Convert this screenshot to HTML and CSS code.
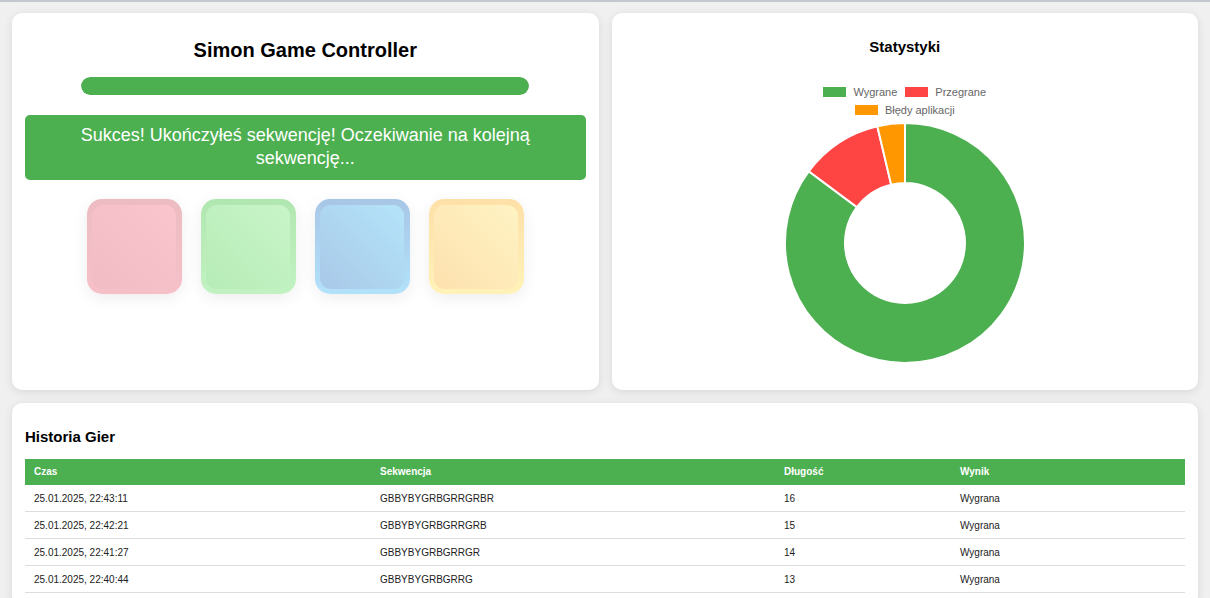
FILE: index.html
```html
<!DOCTYPE html>
<html lang="pl">
<head>
<meta charset="utf-8">
<title>Simon Game Controller</title>
<link rel="stylesheet" href="styles.css">
</head>
<body>
<div class="page">
  <div class="top-row">
    <section class="card game-card">
      <h1 class="game-title">Simon Game Controller</h1>
      <div class="progress"><div class="progress-fill" style="width:100%"></div></div>
      <div class="status">Sukces! Ukończyłeś sekwencję! Oczekiwanie na kolejną sekwencję...</div>
      <div class="pads">
        <div class="pad pad-red"><div class="pad-face"></div></div>
        <div class="pad pad-green"><div class="pad-face"></div></div>
        <div class="pad pad-blue"><div class="pad-face"></div></div>
        <div class="pad pad-yellow"><div class="pad-face"></div></div>
      </div>
    </section>
    <section class="card stats-card">
      <h2 class="stats-title">Statystyki</h2>
      <div class="legend">
        <div class="legend-row">
          <span class="legend-item"><span class="legend-box box-green"></span>Wygrane</span>
          <span class="legend-item"><span class="legend-box box-red"></span>Przegrane</span>
        </div>
        <div class="legend-row">
          <span class="legend-item"><span class="legend-box box-orange"></span>Błędy aplikacji</span>
        </div>
      </div>
      <svg class="donut" width="244" height="244" viewBox="0 0 244 244">
        <path d="M122 2 A120 120 0 1 1 25.75 50.29 L73.87 86.14 A60 60 0 1 0 122 62 Z" fill="#4caf50" stroke="#fff" stroke-width="2"/>
        <path d="M25.75 50.29 A120 120 0 0 1 94.33 5.24 L108.16 63.62 A60 60 0 0 0 73.87 86.14 Z" fill="#ff4444" stroke="#fff" stroke-width="2"/>
        <path d="M94.33 5.24 A120 120 0 0 1 122 2 L122 62 A60 60 0 0 0 108.16 63.62 Z" fill="#ff9800" stroke="#fff" stroke-width="2"/>
      </svg>
    </section>
  </div>
  <section class="card history-card">
    <h2 class="history-title">Historia Gier</h2>
    <table class="history">
      <thead>
        <tr><th class="c-time">Czas</th><th class="c-seq">Sekwencja</th><th class="c-len">Długość</th><th class="c-res">Wynik</th></tr>
      </thead>
      <tbody>
        <tr><td>25.01.2025, 22:43:11</td><td>GBBYBYGRBGRRGRBR</td><td>16</td><td>Wygrana</td></tr>
        <tr><td>25.01.2025, 22:42:21</td><td>GBBYBYGRBGRRGRB</td><td>15</td><td>Wygrana</td></tr>
        <tr><td>25.01.2025, 22:41:27</td><td>GBBYBYGRBGRRGR</td><td>14</td><td>Wygrana</td></tr>
        <tr><td>25.01.2025, 22:40:44</td><td>GBBYBYGRBGRRG</td><td>13</td><td>Wygrana</td></tr>
      </tbody>
    </table>
  </section>
</div>
</body>
</html>
```

FILE: styles.css
```css
* { box-sizing: border-box; }

body {
  margin: 0;
  border-top: 2px solid #c3c7cf;
  background: #f0f0f0;
  font-family: "Liberation Sans", Arial, sans-serif;
  color: #222;
}

.page {
  padding: 11px 12px 12px;
  display: flex;
  flex-direction: column;
  gap: 13px;
}

.top-row {
  display: grid;
  grid-template-columns: 1fr 1fr;
  gap: 13px;
}

.card {
  background: #fff;
  border-radius: 10px;
  box-shadow: 0 2px 10px rgba(0, 0, 0, 0.1);
  padding: 13px;
}

.game-card, .stats-card {
  height: 377px;
}

.game-card {
  display: flex;
  flex-direction: column;
  align-items: center;
}

.game-title {
  margin: 12px 0 0;
  font-size: 20px;
  line-height: 24px;
  font-weight: bold;
  color: #000;
}

.progress {
  margin-top: 15px;
  width: 80%;
  height: 18px;
  border-radius: 10px;
  background: #e0e0e0;
  overflow: hidden;
}

.progress-fill {
  height: 100%;
  background: #4caf50;
  border-radius: 10px;
}

.status {
  margin-top: 20px;
  width: 100%;
  height: 65px;
  padding: 9px 20px;
  background: #4caf50;
  color: #fff;
  border-radius: 5px;
  font-size: 18px;
  line-height: 23px;
  text-align: center;
}

.pads {
  margin-top: 19px;
  display: flex;
  gap: 19px;
  justify-content: center;
}

.pad {
  width: 95px;
  height: 95px;
  border-radius: 15px;
  padding: 6px 6px 5px 5px;
  display: flex;
  box-shadow: 0 4px 16px rgba(0, 0, 0, 0.07);
}

.pad-face {
  flex: 1;
  border-radius: 11px;
}

.pad-red { background: linear-gradient(to bottom, #ecbcc2, #f6c0c9); }
.pad-red .pad-face { background: linear-gradient(to top right, #f1bcc4, #fbc5ce); }

.pad-green { background: linear-gradient(to bottom, #b0e6b0, #c2f2c2); }
.pad-green .pad-face { background: linear-gradient(to top right, #b6ebb6, #c9f5c9); }

.pad-blue { background: linear-gradient(to bottom, #a8c6e6, #b2e2fa); }
.pad-blue .pad-face { background: linear-gradient(to top right, #a9c9e8, #b4e4fa); }

.pad-yellow { background: linear-gradient(to bottom, #fde0a8, #fff2b8); }
.pad-yellow .pad-face { background: linear-gradient(to top right, #fde1ae, #fff3c4); }

.stats-card {
  display: flex;
  flex-direction: column;
  align-items: center;
}

.stats-title {
  margin: 12px 0 0;
  font-size: 15px;
  line-height: 18px;
  font-weight: bold;
  color: #000;
}

.legend {
  margin-top: 29px;
  display: flex;
  flex-direction: column;
  align-items: center;
  gap: 4px;
}

.legend-row {
  display: flex;
  gap: 8px;
  height: 14px;
  align-items: center;
}

.legend-item {
  display: flex;
  align-items: center;
  gap: 7px;
  font-size: 11px;
  line-height: 14px;
  color: #666;
}

.legend-box {
  width: 23px;
  height: 10px;
  display: block;
}

.box-green { background: #4caf50; }
.box-red { background: #ff4444; }
.box-orange { background: #ff9800; }

.donut {
  margin-top: 4px;
  display: block;
}

.history-title {
  margin: 12px 0 13px;
  font-size: 15px;
  line-height: 18px;
  font-weight: bold;
  color: #000;
}

.history {
  width: 100%;
  border-collapse: collapse;
  table-layout: fixed;
  font-size: 10px;
}

.history th, .history td {
  text-align: left;
  line-height: 12px;
}

.history th {
  padding: 7px 9px;
  background: #4caf50;
  color: #fff;
  font-weight: bold;
}

.history td {
  padding: 8px 9px 6px;
  border-bottom: 1px solid #ddd;
  color: #222;
}

.c-time { width: 346px; }
.c-seq { width: 404px; }
.c-len { width: 176px; }
```
